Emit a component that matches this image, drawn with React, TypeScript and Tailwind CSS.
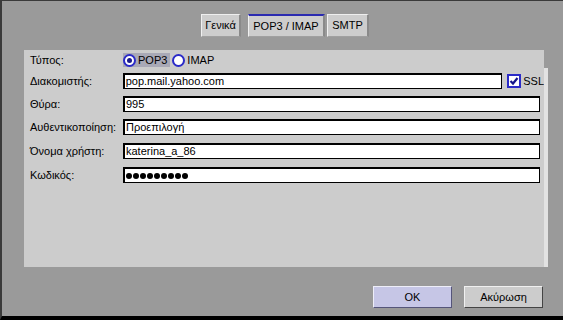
import React from 'react';

const font = { fontFamily: '"Liberation Sans", "DejaVu Sans", sans-serif' };

function Tab({ label, active }: { label: string; active?: boolean }) {
    return (
        <div
            className={`h-[23px] flex items-center justify-center bg-[#cdcdcd] border-l border-l-[#f0f0f0] border-r-2 border-r-[#8a8a8a] border-b border-b-[#a0a0a0] text-[11px] text-black ${
                active ? 'border-t-2 border-t-[#2a2ab0]' : 'border-t border-t-[#eeeeee]'
            }`}
        >
            {label}
        </div>
    );
}

function Field({ value, width }: { value?: string; width: string }) {
    return (
        <div className={`${width} h-[16px] bg-white border border-black border-t-2 border-l-2 flex items-center px-[1px] text-[11px] text-black leading-none`}>
            {value}
        </div>
    );
}

function Row({ label, children, className }: { label: string; children: React.ReactNode; className?: string }) {
    return (
        <div className={`flex items-center h-[16px] ${className ?? ''}`}>
            <div className="w-[93px] text-[11px] text-black">{label}</div>
            {children}
        </div>
    );
}

function Radio({ checked }: { checked?: boolean }) {
    return (
        <div className="w-[13px] h-[13px] rounded-full border-2 border-[#2b2bc8] bg-white flex items-center justify-center">
            {checked && <div className="w-[5px] h-[5px] rounded-full bg-[#1a1a8a]" />}
        </div>
    );
}

export default function App() {
    return (
        <div style={font} className="w-[563px] h-[320px] bg-[#9a9a9a] border-t border-t-[#3a3a3a] border-l-2 border-l-[#3a3a3a] border-b-4 border-b-black flex flex-col overflow-hidden">
            {/* Tabs */}
            <div className="flex pl-[199px] pt-[13px]">
                <div className="w-[40px]"><Tab label="Γενικά" /></div>
                <div className="w-[77px] ml-[7px]"><Tab label="POP3 / IMAP" active /></div>
                <div className="w-[42px] ml-[2px]"><Tab label="SMTP" /></div>
            </div>

            {/* Panel */}
            <div className="flex ml-[22px] mt-[13px] h-[217px]">
                <div className="w-[520px] h-full bg-[#cccccc] pl-[6px] pt-[2px]">
                    <Row label="Τύπος:" className="h-[15px]">
                        <div className="flex items-center h-[15px]">
                            <div className="flex items-center gap-[2px] bg-[#a9a9b6] pr-[3px] h-[14px]">
                                <Radio checked />
                                <span className="text-[11px] text-black">POP3</span>
                            </div>
                            <div className="flex items-center gap-[2px] ml-[2px]">
                                <Radio />
                                <span className="text-[11px] text-black">IMAP</span>
                            </div>
                        </div>
                    </Row>
                    <Row label="Διακομιστής:" className="mt-[5px]">
                        <Field value="pop.mail.yahoo.com" width="w-[381px]" />
                        <div className="ml-[5px] w-[14px] h-[14px] border-2 border-[#2b2bc8] bg-white flex items-center justify-center">
                            <svg width="10" height="10" viewBox="0 0 10 10">
                                <path d="M1.5 5 L4 7.5 L8.5 2" fill="none" stroke="#14148a" strokeWidth="2.2" />
                            </svg>
                        </div>
                        <span className="ml-[2px] text-[11px] text-black">SSL</span>
                    </Row>
                    <Row label="Θύρα:" className="mt-[7px]">
                        <Field value="995" width="w-[417px]" />
                    </Row>
                    <Row label="Αυθεντικοποίηση:" className="mt-[7px]">
                        <Field value="Προεπιλογή" width="w-[417px]" />
                    </Row>
                    <Row label="Όνομα χρήστη:" className="mt-[8px]">
                        <Field value="katerina_a_86" width="w-[417px]" />
                    </Row>
                    <Row label="Κωδικός:" className="mt-[8px]">
                        <div className="w-[417px] h-[16px] bg-white border border-black border-t-2 border-l-2 flex items-center gap-[1px] pl-[1px]">
                            {Array.from({ length: 9 }).map((_, i) => (
                                <div key={i} className="w-[6px] h-[6px] rounded-full bg-black" />
                            ))}
                        </div>
                    </Row>
                </div>
                <div className="w-[4px] mt-[18px] h-[199px] bg-[#e2e2e2]" />
            </div>

            {/* Buttons */}
            <div className="flex justify-end gap-[12px] pr-[20px] mt-[19px]">
                <button className="w-[79px] h-[22px] bg-[#c6c6e6] border border-[#55557a] border-t-[#eeeef8] border-l-[#eeeef8] text-[11px] text-black">
                    OK
                </button>
                <button className="w-[79px] h-[22px] bg-[#cccccc] border border-[#444] border-t-[#f0f0f0] border-l-[#f0f0f0] text-[11px] text-black">
                    Ακύρωση
                </button>
            </div>
        </div>
    );
}
